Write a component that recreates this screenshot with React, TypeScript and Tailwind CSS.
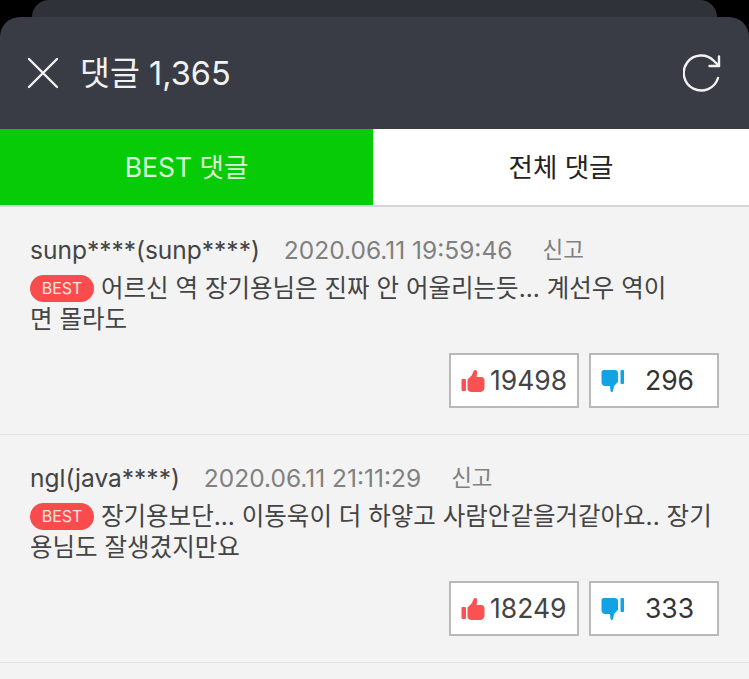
import React from 'react';

const font = "font-['Inter','Noto_Sans_CJK_KR',sans-serif]";

const ThumbUp = () => (
  <svg width="24" height="24" viewBox="0 0 24 24" className="shrink-0">
    <rect x="0.5" y="10" width="4.5" height="12" rx="1" fill="#fa5252" />
    <path d="M6.5 10.5 L11 6 C12 3 12.5 1 14.5 1 C16.5 1 16.5 4 15.5 8 L20 8 C22.5 8 23.5 9.5 23.5 11.5 L23.5 18 C23.5 21.5 21.5 23 18.5 23 L10.5 23 C8 23 6.5 21.5 6.5 20 Z" fill="#fa5252" />
  </svg>
);

const ThumbDown = () => (
  <svg width="24" height="24" viewBox="0 0 24 24" className="shrink-0">
    <rect x="19.5" y="1" width="3.5" height="14" rx="1" fill="#11a3e6" />
    <path d="M2.5 1 L13.5 1 C15.5 1 17 2 17 4 L17 13 C15 15 13.5 16 13 17.5 L12 22 C11.5 23.5 10 23.5 9.5 22 L9 17 L4.5 17 C1.5 17 0.5 15 0.5 13 L0.5 3 C0.5 2 1.5 1 2.5 1 Z" fill="#11a3e6" />
  </svg>
);

type CommentProps = {
  name: string;
  date: string;
  text: string[];
  up: string;
  down: string;
};

const Comment: React.FC<CommentProps> = ({ name, date, text, up, down }) => {
  return (
    <div className="h-[228px] border-b border-[#e2e2e2] px-[30px] pt-[28px]">
      <div className="flex h-[30px] items-center text-[24.5px] leading-[30px]">
        <span className="text-[#444]">{name}</span>
        <span className="ml-6 text-[#808080]">{date}</span>
        <span className="ml-[30px] text-[22.5px] text-[#808080]">신고</span>
      </div>
      <div className="mt-[8px] text-[24.5px] leading-[31px] text-[#444]">
        <div className="flex items-center">
          <span className="mr-[7px] flex h-[27px] w-[64px] items-center justify-center rounded-full bg-[#fa4c4c] text-[16px] text-[#ffe4e4]">BEST</span>
          <span className="whitespace-nowrap">{text[0]}</span>
        </div>
        <div className="whitespace-nowrap">{text[1]}</div>
      </div>
      <div className="mt-[18px] flex justify-end gap-[10px]">
        <div className="flex h-[55px] w-[130px] items-center border-2 border-[#b8b8b8] bg-white pl-[10px] text-[26.5px] text-[#444]">
          <ThumbUp />
          <span className="ml-[5px]">{up}</span>
        </div>
        <div className="flex h-[55px] w-[130px] items-center border-2 border-[#b8b8b8] bg-white pl-[10px] text-[26.5px] text-[#333]">
          <ThumbDown />
          <span className="ml-[20px]">{down}</span>
        </div>
      </div>
    </div>
  );
};

const App: React.FC = () => {
  return (
    <div className={`h-[679px] w-[749px] overflow-hidden bg-black ${font}`}>
      <div className="mx-[32px] h-[17px] rounded-t-[18px] bg-[#2f3239]" />
      <div className="flex h-[112px] items-center justify-between rounded-t-[20px] bg-[#393c44] pl-[27px] pr-[28px]">
        <div className="flex items-center">
          <svg width="32" height="32" viewBox="0 0 32 32" fill="none" stroke="#f2f2f2" strokeWidth="2.4" strokeLinecap="round">
            <path d="M2 2 L30 30 M30 2 L2 30" />
          </svg>
          <span className="ml-[21px] pt-[2px] text-[32.5px] leading-none text-[#f2f2f2]">댓글 1,365</span>
        </div>
        <svg width="38" height="38" viewBox="0 0 38 38" fill="none" stroke="#f2f2f2" strokeWidth="2.4" strokeLinecap="round" strokeLinejoin="round">
          <path d="M35 24 A17.5 17.5 0 1 1 31 7 L36 12" />
          <path d="M36 2.5 L36 12 L26.5 12" />
        </svg>
      </div>
      <div className="flex h-[76px] text-[26.5px]">
        <div className="flex w-[373px] items-center justify-center bg-[#07cb07] pt-[2px] text-[#d8f8d8]">BEST 댓글</div>
        <div className="flex flex-1 items-center justify-center bg-white pt-[2px] text-[#222]">전체 댓글</div>
      </div>
      <div className="h-[474px] border-t-2 border-[#d6d6d6] bg-[#f3f3f3]">
        <Comment
          name="sunp****(sunp****)"
          date="2020.06.11 19:59:46"
          text={['어르신 역 장기용님은 진짜 안 어울리는듯... 계선우 역이', '면 몰라도']}
          up="19498"
          down="296"
        />
        <Comment
          name="ngl(java****)"
          date="2020.06.11 21:11:29"
          text={['장기용보단... 이동욱이 더 하얗고 사람안같을거같아요.. 장기', '용님도 잘생겼지만요']}
          up="18249"
          down="333"
        />
      </div>
    </div>
  );
};

export default App;
